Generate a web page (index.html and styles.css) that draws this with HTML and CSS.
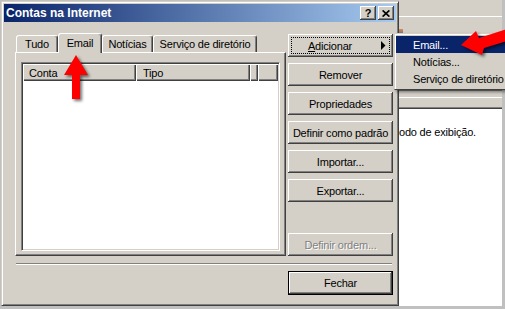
FILE: index.html
```html
<!DOCTYPE html>
<html lang="pt-BR">
<head>
    <meta charset="UTF-8">
    <meta name="viewport" content="width=device-width, initial-scale=1.0">
    <title>Contas na Internet</title>
    <link rel="stylesheet" href="styles.css">
</head>
<body>
    <div class="screen">
        <!-- Dialog window -->
        <div class="dialog">
            <div class="titlebar">
                <span class="title">Contas na Internet</span>
                <div class="caption-buttons">
                    <span class="cap-btn">?</span>
                    <span class="cap-btn">
                        <svg width="8" height="7" viewBox="0 0 8 7"><path d="M0.6 0.4 L7.4 6.6 M7.4 0.4 L0.6 6.6" stroke="#000" stroke-width="1.7" fill="none"/></svg>
                    </span>
                </div>
            </div>

            <div class="client">
                <div class="main-row">
                    <div class="tabs-area">
                        <div class="tab-strip">
                            <div class="tab tab-tudo">Tudo</div>
                            <div class="tab tab-email selected">Email</div>
                            <div class="tab tab-noticias">Notícias</div>
                            <div class="tab tab-servico">Serviço de diretório</div>
                        </div>
                        <div class="tab-panel">
                            <div class="listview">
                                <div class="list-header">
                                    <div class="col col-conta">Conta</div>
                                    <div class="col col-tipo">Tipo</div>
                                    <div class="col col-small"></div>
                                    <div class="col col-fill"></div>
                                </div>
                            </div>
                        </div>
                    </div>

                    <div class="side-buttons">
                        <button class="btn btn-menu focused">
                            <span class="label"><u>A</u>dicionar</span>
                            <svg class="submenu-arrow" width="5" height="9" viewBox="0 0 5 9"><polygon points="0,0 4.5,4.5 0,9" fill="#000"/></svg>
                        </button>
                        <button class="btn">Remover</button>
                        <button class="btn">Propriedades</button>
                        <button class="btn">Definir como padrão</button>
                        <button class="btn">Importar...</button>
                        <button class="btn">Exportar...</button>
                        <button class="btn disabled push-down">Definir ordem...</button>
                    </div>
                </div>

                <div class="separator"></div>

                <div class="footer">
                    <button class="btn default">Fechar</button>
                </div>
            </div>
        </div>

        <!-- Window behind the dialog -->
        <div class="bg-window">
            <div class="bgw-top"></div>
            <div class="bgw-toolbar"><span class="bgw-icon"></span></div>
            <div class="bgw-bar"></div>
            <div class="bgw-gap"></div>
            <div class="bgw-content">odo de exibição.</div>
        </div>

        <!-- Submenu of Adicionar -->
        <div class="popup-menu">
            <div class="menu-item active">Email...</div>
            <div class="menu-item">Notícias...</div>
            <div class="menu-item">Serviço de diretório</div>
        </div>

        <!-- Red pointer arrows -->
        <svg class="arrow arrow-up" width="38" height="58" viewBox="0 0 38 58">
            <polygon points="18,5 30,25 22,25 22,49 14,49 14,25 6,25" fill="#ff0000"/>
        </svg>
        <svg class="arrow arrow-left" width="55" height="40" viewBox="0 0 55 40">
            <polygon points="6,21 21,7 24,14 52,5 52,17 29,24 27,31" fill="#ff0000"/>
        </svg>
    </div>
</body>
</html>
```

FILE: styles.css
```css
* {
    box-sizing: border-box;
}
body {
    margin: 0;
    font-family: Tahoma, "Liberation Sans", Arial, sans-serif;
    font-size: 11px;
    letter-spacing: -0.2px;
    color: #000;
    background: #c0c0c0;
}
.screen {
    position: relative;
    width: 505px;
    height: 309px;
    overflow: hidden;
    display: flex;
    align-items: flex-start;
    padding: 0 3px 0 1px;
    background: #c0c0c0;
}

/* Dialog frame */
.dialog {
    flex-shrink: 0;
    width: 398px;
    height: 305px;
    margin-top: 1px;
    display: flex;
    flex-direction: column;
    padding: 2px;
    background: #d4d0c8;
    border: 1px solid;
    border-color: #d4d0c8 #404040 #404040 #d4d0c8;
    box-shadow: inset 1px 1px #fff, inset -1px -1px #808080;
}
.titlebar {
    height: 18px;
    display: flex;
    align-items: center;
    padding: 0 2px;
    background: linear-gradient(to right, #0a246a, #a6caf0);
    color: #fff;
}
.title {
    font-weight: bold;
    font-size: 12px;
    letter-spacing: 0;
}
.caption-buttons {
    margin-left: auto;
    display: flex;
    gap: 2px;
}
.cap-btn {
    width: 16px;
    height: 14px;
    display: flex;
    align-items: center;
    justify-content: center;
    background: #d4d0c8;
    color: #000;
    font-weight: bold;
    font-size: 11px;
    box-shadow: inset -1px -1px #404040, inset 1px 1px #fff, inset -2px -2px #808080;
}

.client {
    flex: 1;
    display: flex;
    flex-direction: column;
    padding: 11px 3px 0 11px;
}
.main-row {
    display: flex;
    gap: 2px;
}

/* Tabs */
.tabs-area {
    width: 271px;
    display: flex;
    flex-direction: column;
}
.tab-strip {
    height: 19px;
    display: flex;
    align-items: flex-end;
    padding-left: 1px;
}
.tab {
    height: 17px;
    display: flex;
    align-items: center;
    justify-content: center;
    background: #d4d0c8;
    border: 1px solid;
    border-bottom: none;
    border-color: #fff #404040 transparent #fff;
    border-radius: 3px 3px 0 0;
    box-shadow: inset -1px 0 #808080;
    white-space: nowrap;
}
.tab.selected {
    height: 20px;
    margin-bottom: -1px;
    padding-bottom: 2px;
    position: relative;
    z-index: 1;
}
.tab-tudo { width: 42px; }
.tab-email { width: 44px; }
.tab-noticias { width: 51px; }
.tab-servico { width: 104px; }

.tab-panel {
    height: 204px;
    padding: 9px 5px 4px 5px;
    border: 1px solid;
    border-color: #fff #404040 #404040 #fff;
    box-shadow: inset -1px -1px #808080;
}
.listview {
    height: 189px;
    padding: 1px;
    background: #fff;
    border: 1px solid;
    border-color: #808080 #fff #fff #808080;
    box-shadow: inset 1px 1px #404040, inset -1px -1px #d4d0c8;
}
.list-header {
    display: flex;
    height: 17px;
}
.col {
    height: 17px;
    display: flex;
    align-items: center;
    padding-left: 6px;
    background: #d4d0c8;
    box-shadow: inset 1px 1px #fff, inset -1px -1px #404040, inset -2px -2px #808080;
}
.col-conta { width: 113px; }
.col-tipo { width: 114px; padding-left: 7px; }
.col-small { width: 8px; }
.col-fill { flex: 1; }

/* Buttons */
.side-buttons {
    width: 105px;
    display: flex;
    flex-direction: column;
    gap: 6px;
    padding-top: 1px;
}
.btn {
    width: 105px;
    height: 23px;
    flex-shrink: 0;
    padding: 0;
    border: none;
    font: inherit;
    letter-spacing: -0.2px;
    color: #000;
    background: #d4d0c8;
    box-shadow: inset -1px -1px #404040, inset 1px 1px #fff, inset -2px -2px #808080, inset 2px 2px #d4d0c8;
}
.btn-menu {
    display: flex;
    align-items: center;
    padding: 0 7px 0 2px;
}
.btn-menu .label {
    flex: 1;
    text-align: center;
}
.submenu-arrow {
    margin-left: 11px;
}
.focused {
    outline: 1px dotted #000;
    outline-offset: -4px;
}
.push-down {
    margin-top: auto;
}
.disabled {
    color: #808080;
    text-shadow: 1px 1px #fff;
}
.separator {
    height: 2px;
    margin: 7px 1px 0 1px;
    border-top: 1px solid #808080;
    border-bottom: 1px solid #fff;
}
.footer {
    display: flex;
    justify-content: flex-end;
    margin-top: 6px;
}
.btn.default {
    height: 24px;
    border: 1px solid #000;
}

/* Background window */
.bg-window {
    flex: 1;
    height: 306px;
    display: flex;
    flex-direction: column;
    background: #d4d0c8;
}
.bgw-top {
    height: 17px;
    border-bottom: 1px solid #fff;
}
.bgw-toolbar {
    height: 74px;
    padding-top: 12px;
    border-bottom: 1px solid #808080;
}
.bgw-icon {
    display: block;
    width: 4px;
    height: 6px;
    background: linear-gradient(#e88a3a, #3a6ad0);
}
.bgw-bar {
    height: 7px;
    border-bottom: 1px solid #fff;
}
.bgw-gap {
    height: 9px;
}
.bgw-content {
    flex: 1;
    padding-top: 18px;
    background: #fff;
    border-top: 1px solid #808080;
    box-shadow: inset 0 1px #404040;
    white-space: nowrap;
}

/* Popup menu */
.popup-menu {
    position: absolute;
    left: 394px;
    top: 33px;
    width: 130px;
    padding: 2px 1px;
    background: #d4d0c8;
    border: 1px solid;
    border-color: #d4d0c8 #404040 #404040 #d4d0c8;
    box-shadow: inset 1px 1px #fff, 2px 2px 3px rgba(0, 0, 0, 0.45);
}
.menu-item {
    height: 17px;
    display: flex;
    align-items: center;
    padding-left: 17px;
    white-space: nowrap;
}
.menu-item.active {
    background: #0a246a;
    color: #fff;
}

/* Red arrows */
.arrow {
    position: absolute;
    filter: drop-shadow(2px 2px 1.5px rgba(0, 0, 0, 0.55));
}
.arrow-up {
    left: 58px;
    top: 50px;
}
.arrow-left {
    left: 455px;
    top: 24px;
}
```
